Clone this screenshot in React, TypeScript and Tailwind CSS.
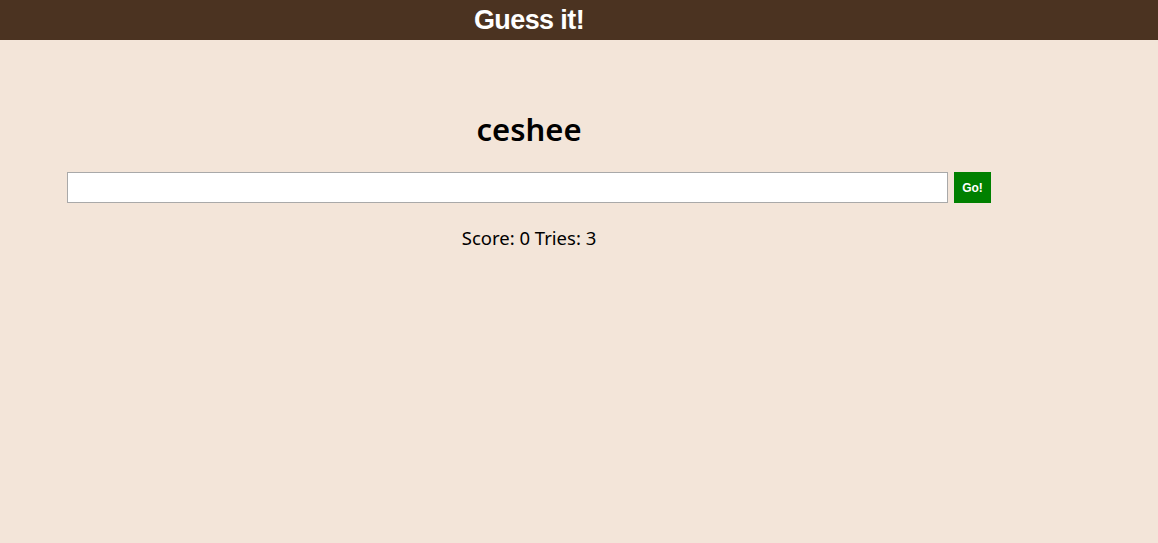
export default function App() {
  return (
    <div className="min-h-[543px] w-full bg-[#f3e5d9]">
      <header className="h-10 w-full bg-[#4b3321]">
        <div className="flex h-10 w-[1058px] items-center justify-center">
          <h1 className="font-['Liberation_Sans',Arial,sans-serif] text-[27px] font-bold leading-none tracking-[-0.6px] text-white">
            Guess it!
          </h1>
        </div>
      </header>

      <main className="flex w-[1058px] flex-col items-center pt-[69px]">
        <h2 className="font-['Noto_Sans','Open_Sans',sans-serif] text-[31px] font-semibold leading-10 text-black">
          ceshee
        </h2>

        <form className="mt-[23px] flex items-stretch gap-[6px]" onSubmit={(e) => e.preventDefault()}>
          <input
            type="text"
            className="h-[31px] w-[881px] border border-[#a9a9a9] bg-white px-1 outline-none"
          />
          <button
            type="submit"
            className="h-[31px] w-[37px] bg-[#008000] font-['Liberation_Sans',Arial,sans-serif] text-[12px] font-bold text-white"
          >
            Go!
          </button>
        </form>

        <p className="mt-[21px] font-['Noto_Sans','Open_Sans',sans-serif] text-[18.5px] leading-7 text-black">
          Score: 0 Tries: 3
        </p>
      </main>
    </div>
  );
}
